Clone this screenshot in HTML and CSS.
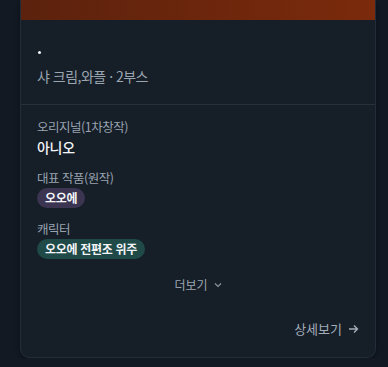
FILE: index.html
```html
<!DOCTYPE html>
<html lang="ko">
<head>
<meta charset="utf-8">
<link rel="stylesheet" href="styles.css">
</head>
<body>
<div class="card">
  <div class="banner"></div>
  <div class="head">
    <div class="dot-line"><span class="dot"></span></div>
    <div class="sub">샤 크림,와플 · 2부스</div>
  </div>
  <div class="info">
    <div class="group">
      <div class="label">오리지널(1차창작)</div>
      <div class="value">아니오</div>
    </div>
    <div class="group">
      <div class="label">대표 작품(원작)</div>
      <div class="badges"><span class="badge purple">오오에</span></div>
    </div>
    <div class="group">
      <div class="label">캐릭터</div>
      <div class="badges"><span class="badge teal">오오에 전편조 위주</span></div>
    </div>
    <div class="more">더보기
      <svg class="chev" width="8" height="6" viewBox="0 0 8 6"><path d="M1 1.5 L4 4.5 L7 1.5" fill="none" stroke="currentColor" stroke-width="1.2"/></svg>
    </div>
    <div class="detail-row">
      <a class="detail">상세보기
        <svg class="arrow" width="11" height="10" viewBox="0 0 11 10"><path d="M1 5 H9.5 M6 1.5 L9.5 5 L6 8.5" fill="none" stroke="currentColor" stroke-width="1.4"/></svg>
      </a>
    </div>
  </div>
</div>
</body>
</html>
```
FILE: styles.css
```css
html, body {
  margin: 0;
  padding: 0;
  background: #121922;
  font-family: "Noto Sans CJK KR", "Noto Sans", sans-serif;
}
.card {
  margin-left: 20px;
  width: 354px;
  height: 357px;
  background: #161e28;
  border: 1px solid #232d39;
  border-top: none;
  border-radius: 0 0 9px 9px;
  box-shadow: 0 2px 4px rgba(0,0,0,0.35);
  overflow: hidden;
  display: flex;
  flex-direction: column;
}
.banner {
  height: 20px;
  background: linear-gradient(90deg, #5c220d, #7b2a0c);
}
.head {
  padding: 22px 16px 18px;
  border-bottom: 1px solid #27313c;
  display: flex;
  flex-direction: column;
  gap: 4px;
}
.dot-line {
  height: 20px;
  display: flex;
  align-items: center;
}
.dot {
  width: 3px;
  height: 3px;
  border-radius: 50%;
  background: #f2f4f7;
  margin-left: 1px;
}
.sub {
  font-size: 14px;
  line-height: 20px;
  letter-spacing: -0.5px;
  color: #9ba5b0;
}
.info {
  padding: 13px 16px 0;
  display: flex;
  flex-direction: column;
  gap: 12px;
  flex: 1;
}
.group {
  display: flex;
  flex-direction: column;
  gap: 1px;
}
.label {
  font-size: 12.5px;
  line-height: 18px;
  letter-spacing: -0.5px;
  color: #98a3af;
}
.value {
  font-size: 14px;
  line-height: 20px;
  letter-spacing: -0.3px;
  color: #f3f5f8;
  font-weight: 500;
}
.badges {
  display: flex;
}
.badge {
  height: 20px;
  line-height: 20px;
  padding: 0 8px;
  border-radius: 10px;
  font-size: 12px;
  font-weight: 700;
  letter-spacing: -0.3px;
  color: #f3f5f8;
}
.purple { background: #3b3552; }
.teal { background: #1f4a48; }
.more {
  margin-top: 5px;
  align-self: center;
  font-size: 12px;
  line-height: 18px;
  color: #9ba5b0;
  display: flex;
  align-items: center;
  gap: 6px;
}
.chev { color: #8a949f; }
.detail-row {
  display: flex;
  justify-content: flex-end;
  margin-top: 13px;
}
.detail {
  font-size: 13px;
  line-height: 20px;
  color: #a3adb8;
  display: flex;
  align-items: center;
  gap: 6px;
}
.arrow { color: #a3adb8; }
```
